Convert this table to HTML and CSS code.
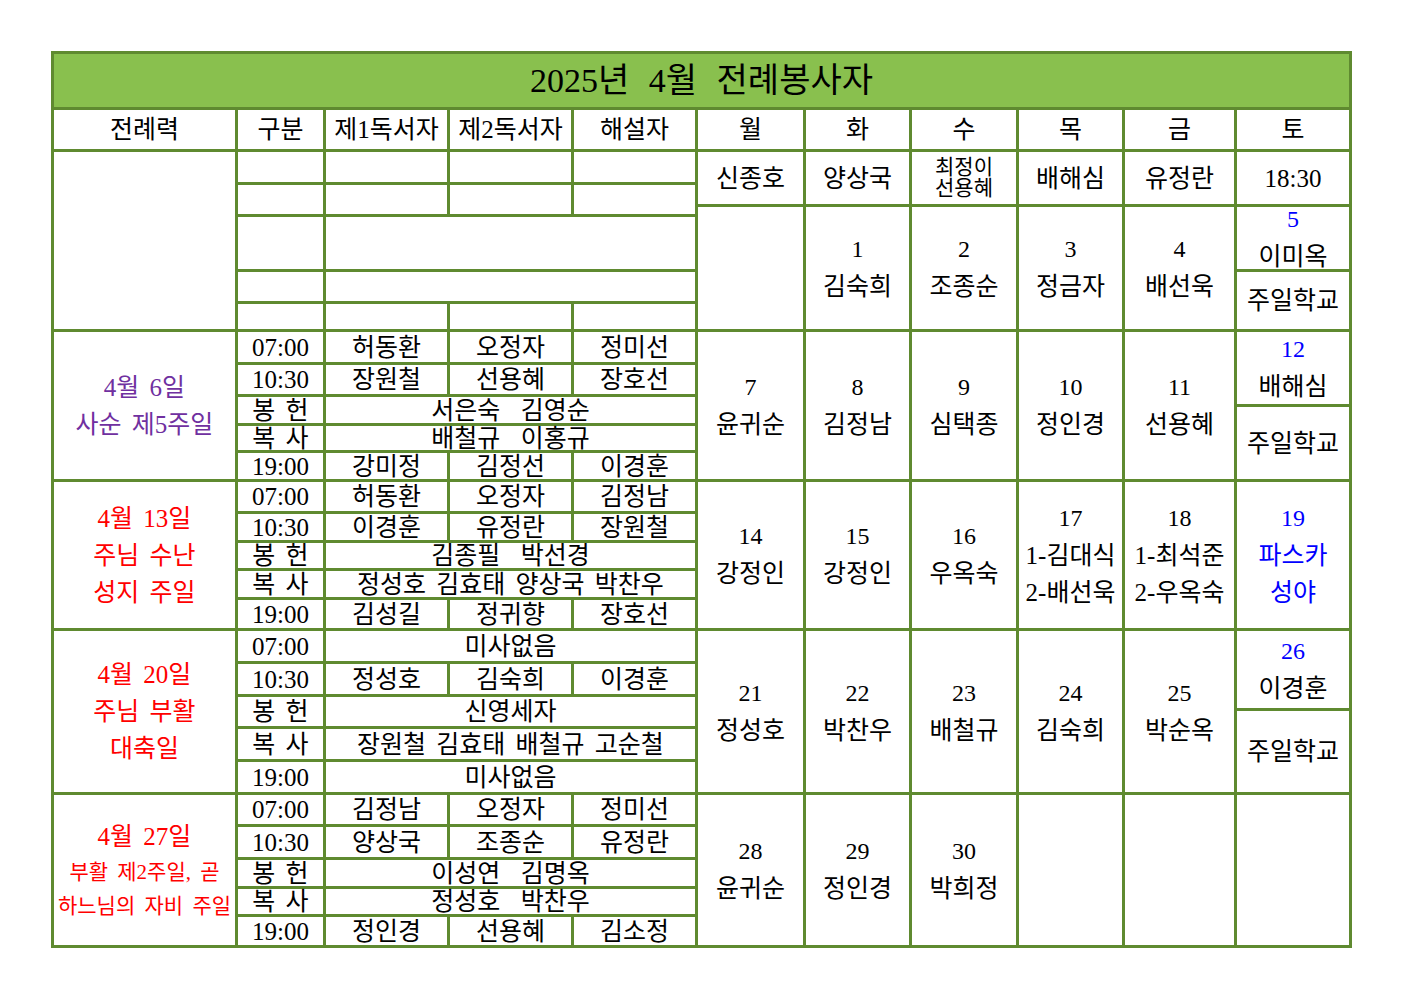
FILE: index.html
```html
<!DOCTYPE html>
<html lang="ko">
<head>
<meta charset="utf-8">
<title>2025년 4월 전례봉사자</title>
<link rel="stylesheet" href="styles.css">
</head>
<body>
<div class="sheet">
  <div class="g">
    <div class="c title cs11">2025년 4월 전례봉사자</div>

    <div class="c">전례력</div>
    <div class="c">구분</div>
    <div class="c">제1독서자</div>
    <div class="c">제2독서자</div>
    <div class="c">해설자</div>
    <div class="c">월</div>
    <div class="c">화</div>
    <div class="c">수</div>
    <div class="c">목</div>
    <div class="c">금</div>
    <div class="c">토</div>

    <!-- section 0 -->
    <div class="c rs6"></div>
    <div class="c"></div>
    <div class="c"></div>
    <div class="c"></div>
    <div class="c"></div>
    <div class="c rs2">신종호</div>
    <div class="c rs2">양상국</div>
    <div class="c rs2 tight"><span>최정이</span><span>선용혜</span></div>
    <div class="c rs2">배해심</div>
    <div class="c rs2">유정란</div>
    <div class="c rs2 t">18:30</div>

    <div class="c rs2"></div>
    <div class="c rs2"></div>
    <div class="c rs2"></div>
    <div class="c rs2"></div>

    <div class="c rs4"></div>
    <div class="c rs4"><span class="d">1</span><span>김숙희</span></div>
    <div class="c rs4"><span class="d">2</span><span>조종순</span></div>
    <div class="c rs4"><span class="d">3</span><span>정금자</span></div>
    <div class="c rs4"><span class="d">4</span><span>배선욱</span></div>
    <div class="c rs2"><span class="d blue">5</span><span>이미옥</span></div>

    <div class="c"></div>
    <div class="c cs3"></div>

    <div class="c"></div>
    <div class="c cs3"></div>
    <div class="c rs2">주일학교</div>

    <div class="c"></div>
    <div class="c"></div>
    <div class="c"></div>
    <div class="c"></div>

    <!-- section 1 -->
    <div class="c rs6 purple"><span>4월 6일</span><span>사순 제5주일</span></div>
    <div class="c t">07:00</div>
    <div class="c">허동환</div>
    <div class="c">오정자</div>
    <div class="c">정미선</div>
    <div class="c rs6"><span class="d">7</span><span>윤귀순</span></div>
    <div class="c rs6"><span class="d">8</span><span>김정남</span></div>
    <div class="c rs6"><span class="d">9</span><span>심택종</span></div>
    <div class="c rs6"><span class="d">10</span><span>정인경</span></div>
    <div class="c rs6"><span class="d">11</span><span>선용혜</span></div>
    <div class="c rs3"><span class="d blue">12</span><span>배해심</span></div>

    <div class="c t">10:30</div>
    <div class="c">장원철</div>
    <div class="c">선용혜</div>
    <div class="c">장호선</div>

    <div class="c rs2">봉 헌</div>
    <div class="c rs2 cs3">서은숙&nbsp; 김영순</div>

    <div class="c rs3">주일학교</div>

    <div class="c">복 사</div>
    <div class="c cs3">배철규&nbsp; 이홍규</div>

    <div class="c t">19:00</div>
    <div class="c">강미정</div>
    <div class="c">김정선</div>
    <div class="c">이경훈</div>

    <!-- section 2 -->
    <div class="c rs5 red"><span>4월 13일</span><span>주님 수난</span><span>성지 주일</span></div>
    <div class="c t">07:00</div>
    <div class="c">허동환</div>
    <div class="c">오정자</div>
    <div class="c">김정남</div>
    <div class="c rs5"><span class="d">14</span><span>강정인</span></div>
    <div class="c rs5"><span class="d">15</span><span>강정인</span></div>
    <div class="c rs5"><span class="d">16</span><span>우옥숙</span></div>
    <div class="c rs5"><span class="d">17</span><span>1-김대식</span><span>2-배선욱</span></div>
    <div class="c rs5"><span class="d">18</span><span>1-최석준</span><span>2-우옥숙</span></div>
    <div class="c rs5 blue"><span class="d">19</span><span>파스카</span><span>성야</span></div>

    <div class="c t">10:30</div>
    <div class="c">이경훈</div>
    <div class="c">유정란</div>
    <div class="c">장원철</div>

    <div class="c">봉 헌</div>
    <div class="c cs3">김종필&nbsp; 박선경</div>

    <div class="c">복 사</div>
    <div class="c cs3">정성호 김효태 양상국 박찬우</div>

    <div class="c t">19:00</div>
    <div class="c">김성길</div>
    <div class="c">정귀향</div>
    <div class="c">장호선</div>

    <!-- section 3 -->
    <div class="c rs6 red"><span>4월 20일</span><span>주님 부활</span><span>대축일</span></div>
    <div class="c t">07:00</div>
    <div class="c cs3">미사없음</div>
    <div class="c rs6"><span class="d">21</span><span>정성호</span></div>
    <div class="c rs6"><span class="d">22</span><span>박찬우</span></div>
    <div class="c rs6"><span class="d">23</span><span>배철규</span></div>
    <div class="c rs6"><span class="d">24</span><span>김숙희</span></div>
    <div class="c rs6"><span class="d">25</span><span>박순옥</span></div>
    <div class="c rs3"><span class="d blue">26</span><span>이경훈</span></div>

    <div class="c t">10:30</div>
    <div class="c">정성호</div>
    <div class="c">김숙희</div>
    <div class="c">이경훈</div>

    <div class="c rs2">봉 헌</div>
    <div class="c rs2 cs3">신영세자</div>

    <div class="c rs3">주일학교</div>

    <div class="c">복 사</div>
    <div class="c cs3">장원철 김효태 배철규 고순철</div>

    <div class="c t">19:00</div>
    <div class="c cs3">미사없음</div>

    <!-- section 4 -->
    <div class="c rs5 red"><span>4월 27일</span><span class="sm">부활 제2주일, 곧</span><span class="sm">하느님의 자비 주일</span></div>
    <div class="c t">07:00</div>
    <div class="c">김정남</div>
    <div class="c">오정자</div>
    <div class="c">정미선</div>
    <div class="c rs5"><span class="d">28</span><span>윤귀순</span></div>
    <div class="c rs5"><span class="d">29</span><span>정인경</span></div>
    <div class="c rs5"><span class="d">30</span><span>박희정</span></div>
    <div class="c rs5"></div>
    <div class="c rs5"></div>
    <div class="c rs5"></div>

    <div class="c t">10:30</div>
    <div class="c">양상국</div>
    <div class="c">조종순</div>
    <div class="c">유정란</div>

    <div class="c">봉 헌</div>
    <div class="c cs3">이성연&nbsp; 김명옥</div>

    <div class="c">복 사</div>
    <div class="c cs3">정성호&nbsp; 박찬우</div>

    <div class="c t">19:00</div>
    <div class="c">정인경</div>
    <div class="c">선용혜</div>
    <div class="c">김소정</div>
  </div>
</div>
</body>
</html>
```

FILE: styles.css
```css
html, body {
  margin: 0;
  background: #ffffff;
}

body {
  font-family: "Liberation Serif", "Noto Sans CJK KR", serif;
  color: #000000;
}

.sheet {
  padding: 51px 0 0 51px;
}

.g {
  display: grid;
  width: max-content;
  grid-template-columns: 181px 85px 121px 121px 121px 105px 103px 104px 103px 109px 112px;
  grid-template-rows:
    53px 39px
    30px 19px 7px 52px 29px 25px
    30px 29px 7px 16px 24px 26px
    29px 26px 25px 26px 28px
    30px 30px 11px 15px 30px 30px
    29px 30px 26px 25px 28px;
  gap: 3px;
  padding: 3px;
  background: #5f8a30;
}

.c {
  background: #ffffff;
  display: flex;
  flex-direction: column;
  align-items: center;
  justify-content: center;
  text-align: center;
  font-size: 25px;
  line-height: 37px;
  white-space: nowrap;
  word-spacing: 4px;
  min-width: 0;
  min-height: 0;
}

.title {
  background: #89c04e;
  font-size: 34px;
  word-spacing: 11px;
}

.t {
  font-size: 25px;
}

.d {
  font-size: 24px;
}

.tight {
  font-size: 21px;
  line-height: 21.5px;
}

.sm {
  font-size: 21px;
  line-height: 34px;
}

.purple { color: #7030a0; }
.red { color: #ff0000; }
.blue { color: #0000ff; }

.rs2 { grid-row: span 2; }
.rs3 { grid-row: span 3; }
.rs4 { grid-row: span 4; }
.rs5 { grid-row: span 5; }
.rs6 { grid-row: span 6; }
.cs3 { grid-column: span 3; }
.cs11 { grid-column: span 11; }
```
